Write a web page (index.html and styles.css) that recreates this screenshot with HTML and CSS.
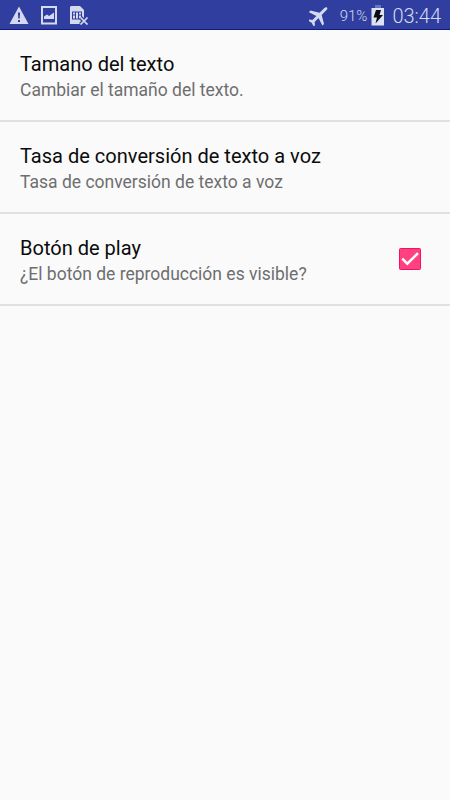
FILE: index.html
```html
<!DOCTYPE html>
<html lang="es">
<head>
    <meta charset="UTF-8">
    <meta name="viewport" content="width=device-width, initial-scale=1.0">
    <title>Ajustes</title>
    <link rel="stylesheet" href="styles.css">
</head>
<body>

    <header class="statusbar">
        <div class="left">
            <svg width="20" height="20" viewBox="0 0 20 20">
                <path fill="currentColor" fill-rule="evenodd" d="M10 1.5L19.5 19H.5zM8.9 7.5l.4 6h1.4l.4-6zM9 15v2h2v-2z"/>
            </svg>
            <svg width="18" height="20" viewBox="0 0 18 20">
                <path fill="currentColor" fill-rule="evenodd" d="M1 1h16v18.5H1zM3 3v14.5h12V3z"/>
                <path fill="currentColor" d="M4 14v-2.5l3-2 2 1.5 5-3.5V14z"/>
            </svg>
            <svg width="20" height="20" viewBox="0 0 20 20">
                <path fill="currentColor" fill-rule="evenodd" d="M2 1h9l4 4v14H1V2zM3 6.5v8h10v-8z"/>
                <path fill="currentColor" d="M4 7.5h2v2H4zM7 7.5h2v6H7zM10 7.5h2v2h-2zM4 10.5h2v3H4zM10 10.5h2v3h-2z"/>
                <path class="cross-edge" d="M11.5 12.5l7 7M18.5 12.5l-7 7"/>
                <path class="cross" d="M11.5 12.5l7 7M18.5 12.5l-7 7"/>
            </svg>
        </div>
        <div class="right">
            <svg class="plane" width="20" height="20" viewBox="2.5 2 20 20">
                <path fill="currentColor" transform="rotate(45 12 12)" d="M21.5 16v-2.3L13.5 9V2.5C13.5 1 13 0 12 0s-1.5 1-1.5 2.5V9l-8 4.7V16l8-2.5V19L8 21v1.8l4-1.1 4 1.1V21l-2.5-2v-5.5z"/>
            </svg>
            <span class="percent">91%</span>
            <svg class="battery" width="14" height="21" viewBox="0 0 14 21">
                <path class="cap" d="M4 0h6v3H4z"/>
                <path fill="#dfe2f5" d="M.5 3h12.5v17.5H.5z"/>
                <path fill="#080d12" d="M5 5h5L8.5 10H12L4.5 18.5 6 12.5H2.5z"/>
            </svg>
            <span class="clock">03:44</span>
        </div>
    </header>

    <main class="settings">
        <div class="item">
            <div>
                <div class="title">Tamano del texto</div>
                <div class="summary">Cambiar el tamaño del texto.</div>
            </div>
        </div>
        <div class="item">
            <div>
                <div class="title">Tasa de conversión de texto a voz</div>
                <div class="summary">Tasa de conversión de texto a voz</div>
            </div>
        </div>
        <div class="item">
            <div>
                <div class="title">Botón de play</div>
                <div class="summary">¿El botón de reproducción es visible?</div>
            </div>
            <svg class="checkbox" width="22" height="22" viewBox="0 0 22 22">
                <rect class="box" x=".5" y=".5" width="21" height="21" rx="1"/>
                <path class="tick" d="M3.3 10.7l5 5L19 5.2"/>
            </svg>
        </div>
    </main>

</body>
</html>
```

FILE: styles.css
```css
*{
    box-sizing: border-box;
}
html, body{
    height: 100%;
    margin: 0;
}

body{
    font-family: Roboto, 'Liberation Sans', sans-serif;
    background-color: #fafafa;
    overflow: hidden;
}

svg{
    display: block;
    flex: none;
}

.statusbar{
    display: flex;
    justify-content: space-between;
    height: 30px;
    padding: 0 9px;
    background-color: #303f9f;
    border-bottom: 1px solid #101b83;
    color: #d5d9f0;
}
.statusbar .left,
.statusbar .right{
    display: flex;
    align-items: flex-start;
    padding-top: 5px;
}
.statusbar .left{
    gap: 11px;
}
.plane{
    margin-top: 1px;
}
.percent{
    margin: 2px 4px 0 11px;
    font-size: 15px;
    font-weight: 300;
    line-height: 18px;
}
.cap{
    fill: #6975bd;
}
.clock{
    margin: 0 0 0 7px;
    font-size: 20px;
    font-weight: 300;
    line-height: 23px;
}
.cross,
.cross-edge{
    fill: none;
    stroke: currentColor;
    stroke-width: 1.7;
}
.cross-edge{
    stroke: #303f9f;
    stroke-width: 4;
}

.item{
    display: flex;
    justify-content: space-between;
    height: 92px;
    padding: 22px 29px 0 20px;
    border-bottom: 2px solid #e1e1e1;
}
.title{
    font-size: 20.05px;
    line-height: 25px;
    color: #0b0b0b;
}
.summary{
    padding-top: 1px;
    font-size: 17.5px;
    line-height: 25px;
    color: #6e6e6e;
}

.checkbox{
    margin-top: 12px;
}
.box{
    fill: #ff4081;
    stroke: #f50f68;
}
.tick{
    fill: none;
    stroke: #fff;
    stroke-width: 2.5;
}
```
